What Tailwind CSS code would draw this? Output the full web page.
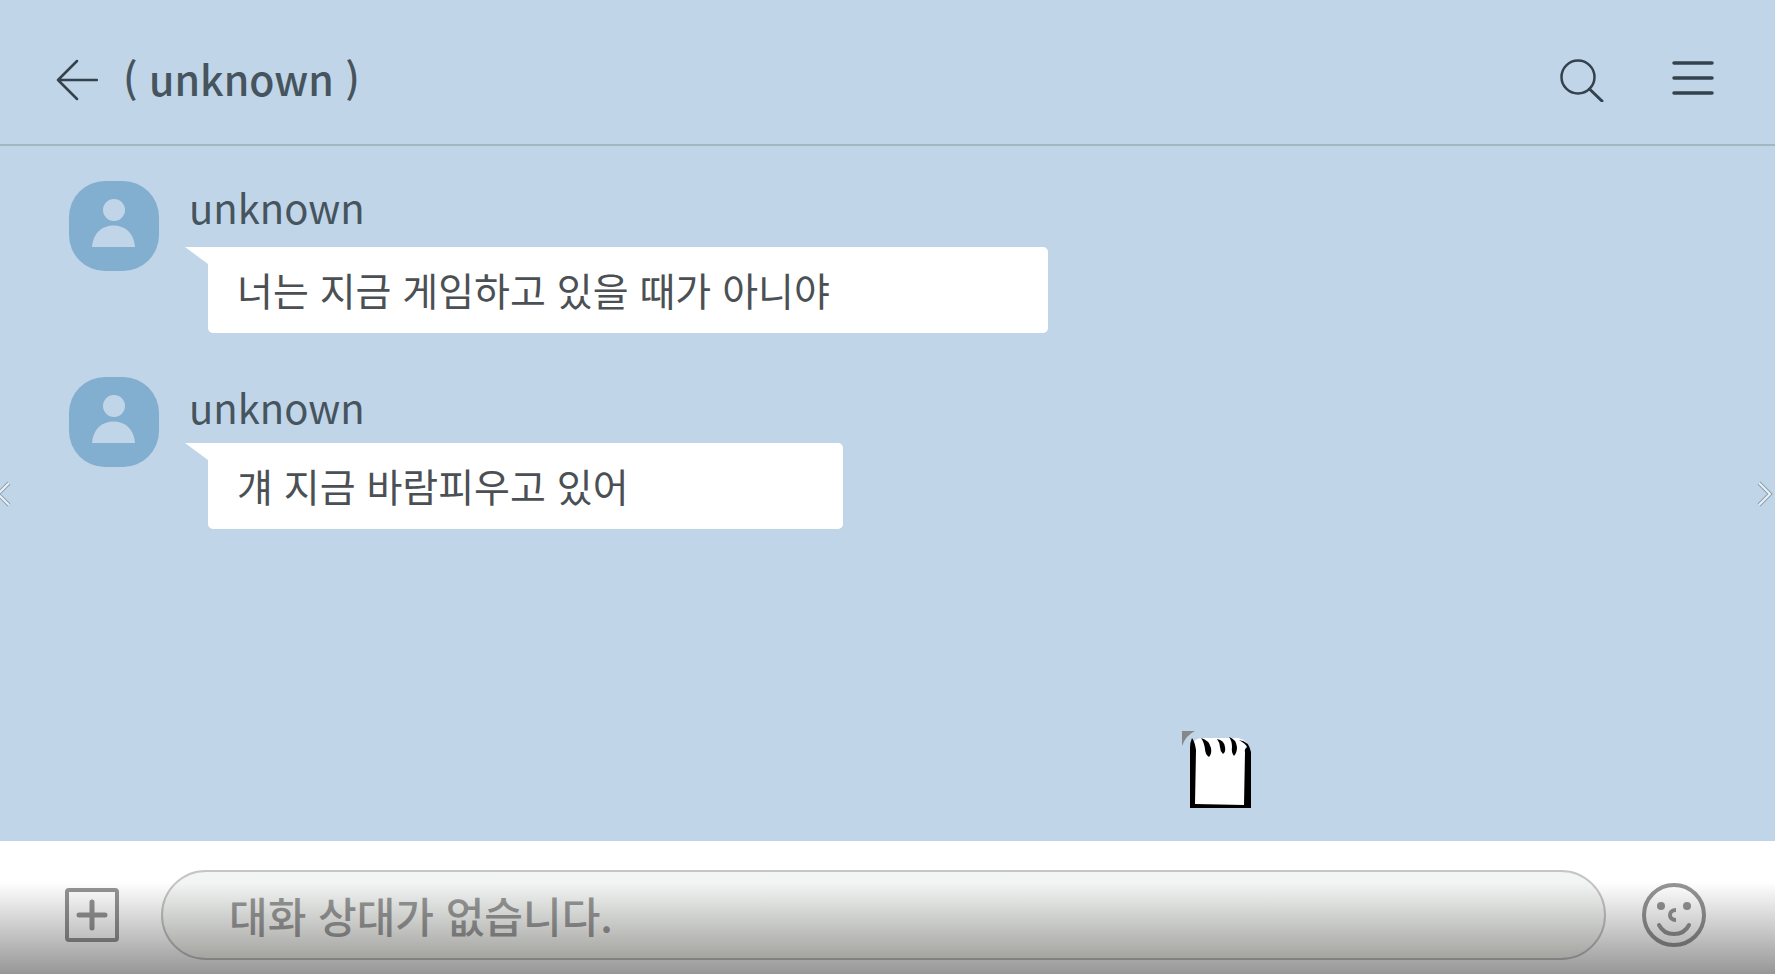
<!DOCTYPE html>
<html lang="ko">

<head>
    <meta charset="UTF-8">
    <meta name="viewport" content="width=device-width, initial-scale=1.0">
    <title>( unknown )</title>
    <script src="https://cdn.jsdelivr.net/npm/@tailwindcss/browser@4"></script>
</head>

<body class="bg-[#c1d5e9] text-[#46545d] font-['Noto_Sans_CJK_KR',sans-serif]">
    <div class="relative min-h-screen flex flex-col overflow-hidden">
        <!-- Header -->
        <header class="flex items-center justify-between h-[146px] pl-[55px] pr-[61px] pt-4 border-b-2 border-[#a3b6c2]">
            <div class="flex items-center gap-[25px]">
                <button type="button" aria-label="Back">
                    <svg class="w-[43px] h-[42px]" viewBox="0 0 43 42" fill="none" stroke="#33424d" stroke-width="2.500" stroke-linecap="round" stroke-linejoin="round">
                        <path d="M22 2L3 21L22 40M3 21H42" />
                    </svg>
                </button>
                <h1 class="pb-1 text-[41px] leading-[60px] font-medium">( unknown )</h1>
            </div>
            <div class="flex items-center gap-[68px]">
                <button type="button" aria-label="Search">
                    <svg class="w-11 h-11" viewBox="0 0 44 44" fill="none" stroke="#33424d" stroke-width="2.500" stroke-linecap="round">
                        <circle cx="18" cy="19" r="16.5" />
                        <path d="M29.500 31L42 43" stroke-width="3" />
                    </svg>
                </button>
                <button type="button" aria-label="Menu">
                    <svg class="w-[42px] h-11" viewBox="0 0 42 44" fill="none" stroke="#33424d" stroke-width="3.500" stroke-linecap="round">
                        <path d="M2 5H40M2 20H40M2 35H40" />
                    </svg>
                </button>
            </div>
        </header>

        <!-- Messages -->
        <main class="flex-1 flex flex-col gap-11 pl-[69px] pt-[35px] pb-10">
            <article class="flex items-start gap-[30px]">
                <svg class="w-[90px] h-[90px] shrink-0" viewBox="0 0 90 90">
                    <rect width="90" height="90" rx="36" fill="#82aed0" />
                    <circle cx="45" cy="29" r="11" fill="#c1d5e9" />
                    <path d="M23 66C24 52 33 44.500 44.500 44.500S65 52 66 66Z" fill="#c1d5e9" />
                </svg>
                <div>
                    <h2 class="h-[66px] text-[40px] leading-[52px]">unknown</h2>
                    <div class="relative ml-[19px] w-[840px] rounded-[5px] rounded-tl-none bg-white px-[29px] pt-3 pb-[14px]">
                        <svg class="absolute -left-6 top-0 w-6 h-[18px]" viewBox="0 0 24 18" fill="white"><path d="M1 0H24V17Z" /></svg>
                        <p class="text-[39px] leading-[60px] text-[#4b5054]">너는 지금 게임하고 있을 때가 아니야</p>
                    </div>
                </div>
            </article>

            <article class="flex items-start gap-[30px]">
                <svg class="w-[90px] h-[90px] shrink-0" viewBox="0 0 90 90">
                    <rect width="90" height="90" rx="36" fill="#82aed0" />
                    <circle cx="45" cy="29" r="11" fill="#c1d5e9" />
                    <path d="M23 66C24 52 33 44.500 44.500 44.500S65 52 66 66Z" fill="#c1d5e9" />
                </svg>
                <div>
                    <h2 class="h-[66px] pt-1 text-[40px] leading-[52px]">unknown</h2>
                    <div class="relative ml-[19px] w-[635px] rounded-[5px] rounded-tl-none bg-white px-[29px] pt-3 pb-[14px]">
                        <svg class="absolute -left-6 top-0 w-6 h-[18px]" viewBox="0 0 24 18" fill="white"><path d="M1 0H24V17Z" /></svg>
                        <p class="text-[39px] leading-[60px] text-[#4b5054]">걔 지금 바람피우고 있어</p>
                    </div>
                </div>
            </article>
        </main>

        <!-- Message input -->
        <footer class="relative flex items-center h-[133px] pl-[65px] pr-[68px] pt-[14px] bg-white">
            <button type="button" aria-label="Add">
                <svg class="w-[54px] h-[54px]" viewBox="0 0 54 54" fill="none" stroke="#959595" stroke-width="4">
                    <rect x="2" y="2" width="50" height="50" rx="2" />
                    <path d="M27 14V40M14 27H40" stroke-width="5" stroke-linecap="round" />
                </svg>
            </button>
            <input type="text" aria-label="Message" placeholder="대화 상대가 없습니다."
                class="flex-1 min-w-0 h-[90px] ml-[42px] mr-[35px] px-[66px] rounded-full border-2 border-[#c4c5c4] bg-linear-to-b from-[#f1f5f4] to-[#f8f8f3] text-[42px] font-medium placeholder:text-[#9a9a9a] outline-none">
            <button type="button" aria-label="Emoji">
                <svg class="w-[66px] h-[66px]" viewBox="0 0 66 66" fill="none" stroke="#959595" stroke-width="4" stroke-linecap="round">
                    <circle cx="33" cy="33" r="30" />
                    <circle cx="20" cy="24" r="4" fill="#959595" stroke="none" />
                    <circle cx="46" cy="24" r="4" fill="#959595" stroke="none" />
                    <path d="M35 28C27 28 27 38 35 38" stroke-linecap="butt" />
                    <path d="M18 43C24 55 42 55 48 43" />
                </svg>
            </button>
            <div class="absolute inset-x-0 bottom-0 h-[92px] bg-linear-to-b from-black/0 to-black/41 pointer-events-none"></div>
        </footer>

        <!-- Previous / next -->
        <button type="button" aria-label="Previous" class="absolute -left-1 top-[480px]">
            <svg class="w-4 h-7" viewBox="0 0 16 28" fill="none">
                <path d="M13 3L2 14L13 25" stroke="#8d9eac" stroke-width="4" />
                <path d="M13 3L2 14L13 25" stroke="#eaf2f8" stroke-width="2" />
            </svg>
        </button>
        <button type="button" aria-label="Next" class="absolute right-0.5 top-[480px]">
            <svg class="w-4 h-7" viewBox="0 0 16 28" fill="none">
                <path d="M2 3L13 14L2 25" stroke="#8d9eac" stroke-width="4" />
                <path d="M2 3L13 14L2 25" stroke="#eaf2f8" stroke-width="2" />
            </svg>
        </button>

        <!-- Paw cursor -->
        <svg class="absolute left-[1180px] top-[730px] w-[72px] h-[80px] pointer-events-none" viewBox="0 0 72 80">
            <path d="M2 1H15Q6 5 2 16Z" fill="#858789" />
            <path d="M13 14Q15 8 22 8H58Q68 10 69 20V76H12Z" fill="white" />
            <path d="M12 8Q10 12 10 18V78H71V22Q69 11 59 10Q66 14 67 17Q64 19 65 22L64 75L15 74L16 20Q15 12 12 8Z" />
            <path d="M21 8Q29 10 31 18Q32 24 29 27Q25 24 25 19Q24 12 21 8Z" />
            <path d="M37 9Q44 10 45 17Q46 22 43 24Q40 21 40 17Q40 13 37 9Z" />
            <path d="M49 7Q56 9 57 17Q57 23 54 26Q51 22 52 17Q52 11 49 7Z" />
        </svg>
    </div>
</body>

</html>
